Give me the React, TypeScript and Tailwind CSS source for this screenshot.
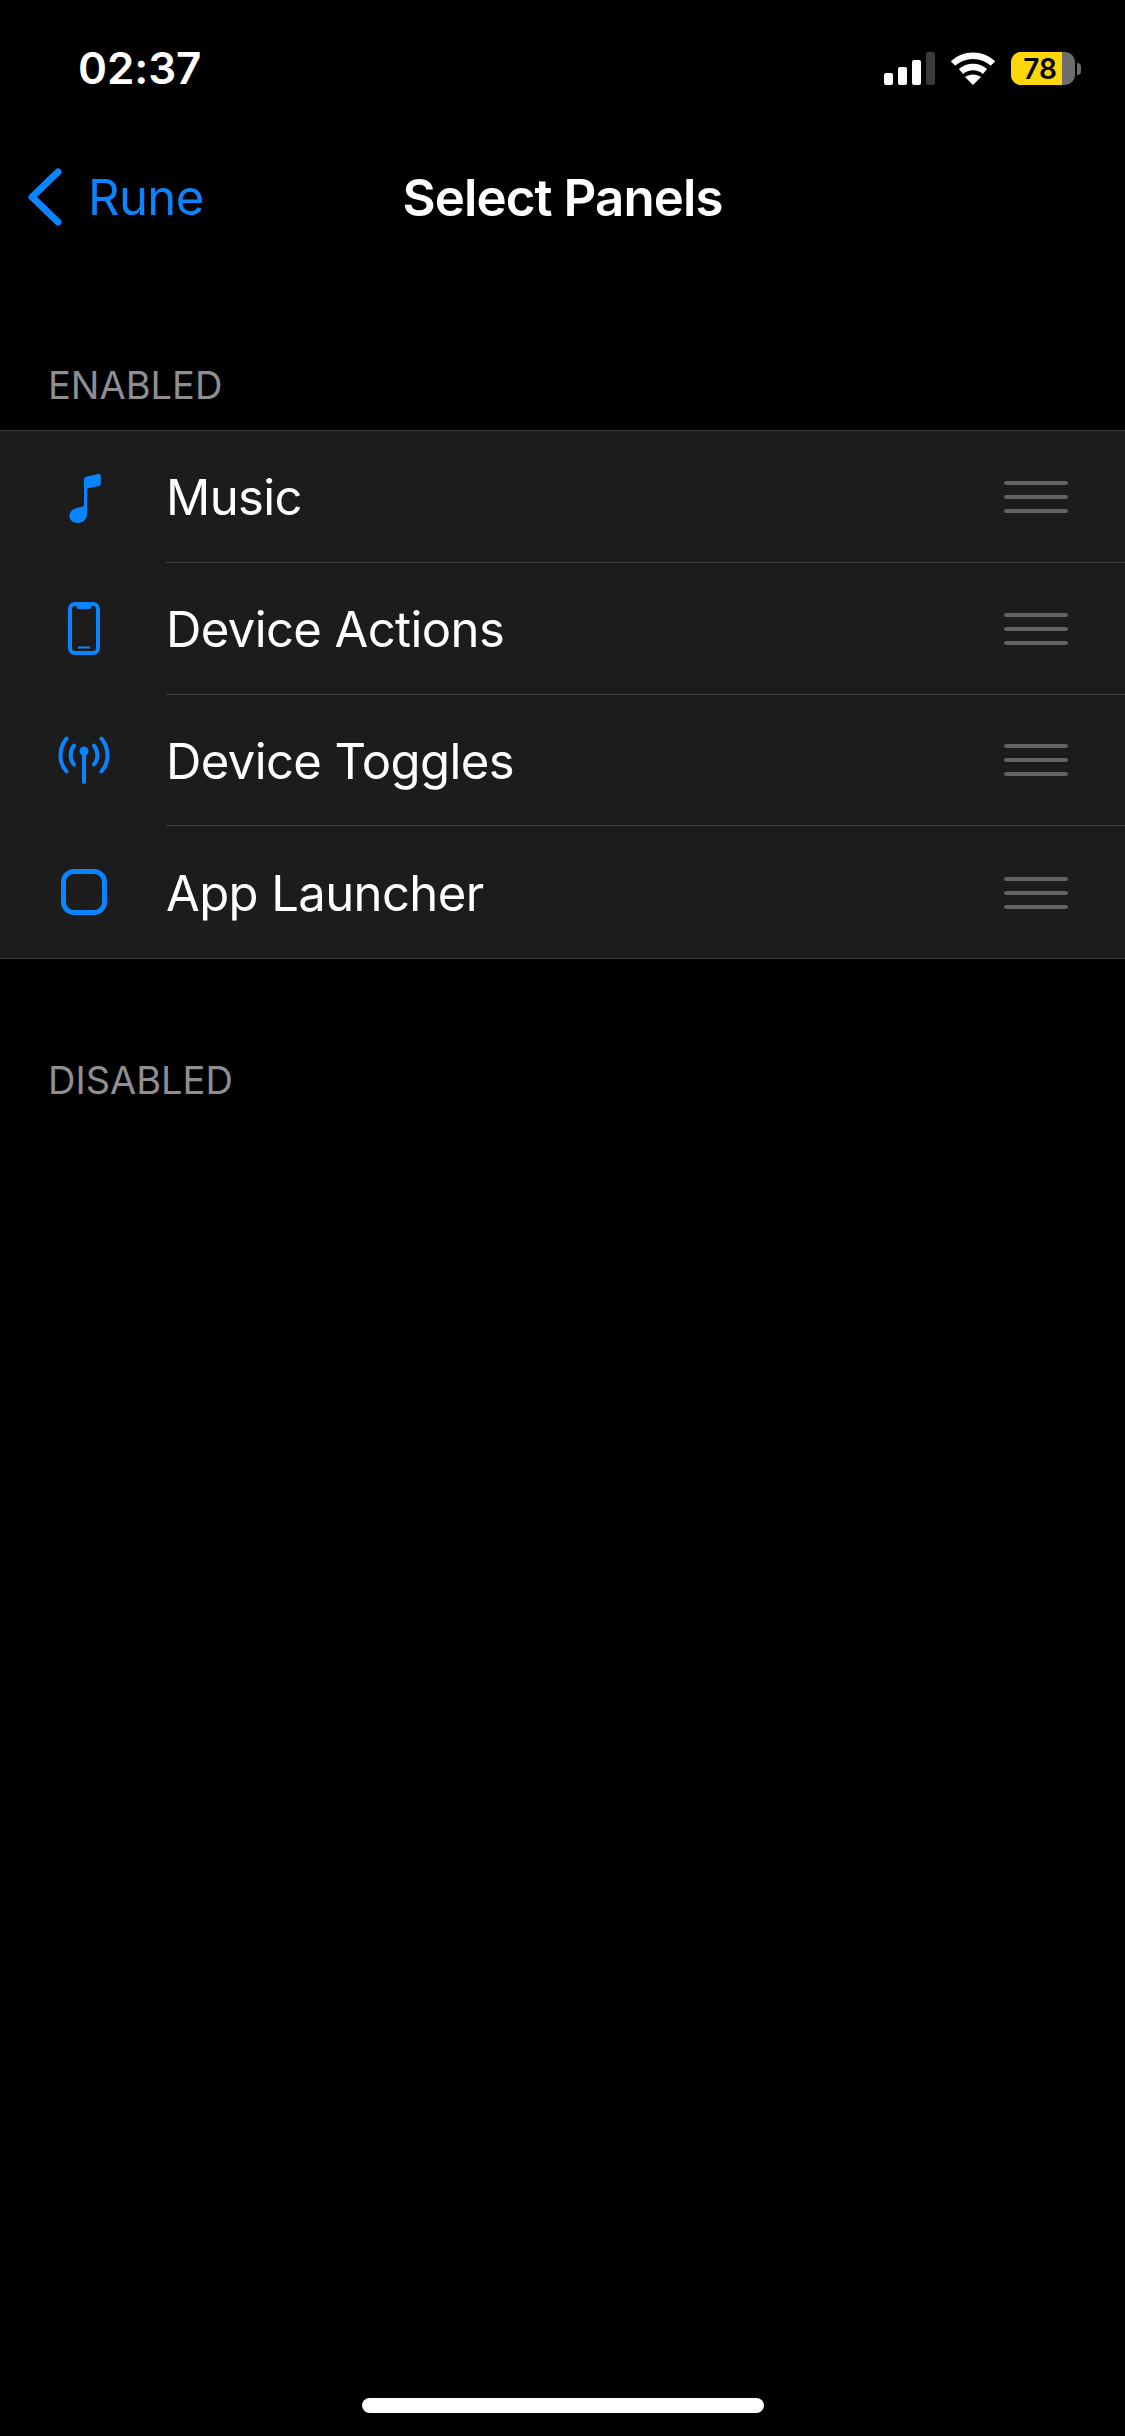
const panels = [
  { name: "Music", icon: <MusicIcon /> },
  { name: "Device Actions", icon: <PhoneIcon /> },
  { name: "Device Toggles", icon: <AntennaIcon /> },
  { name: "App Launcher", icon: <SquareIcon /> },
];

function MusicIcon() {
  return (
    <svg width="33" height="52" viewBox="0 0 33 52" fill="#0a84ff">
      <path d="M16 8.500c0-1.600.8-2.500 2.300-2.800L30 3c1.700-.4 2.800.5 2.800 2.200v7.600c0 1.300-.6 2-1.900 2.300L20.500 17.200c-.9.2-1.300.7-1.300 1.600v23.400c0 5.600-4 9.800-9.200 9.800C5 52 1.500 49.200 1.500 45c0-4.300 3-7.100 7.800-8.200l5-1.100c1.200-.3 1.700-.9 1.700-2.100z" />
    </svg>
  );
}

function PhoneIcon() {
  return (
    <svg width="32" height="53" viewBox="0 0 32 53" fill="none" stroke="#0a84ff">
      <rect x="2" y="2" width="28" height="49" rx="5" strokeWidth="4" />
      <path d="M9 3.500h14v1.200a2 2 0 0 1-2 2h-10a2 2 0 0 1-2-2z" fill="#0a84ff" strokeWidth="1" />
      <path d="M10 45.500h12" strokeWidth="2" />
    </svg>
  );
}

function AntennaIcon() {
  return (
    <svg width="54" height="48" viewBox="0 0 54 48" fill="none" stroke="#0a84ff" strokeWidth="4" strokeLinecap="round">
      <path d="M27 16v30" />
      <circle cx="27" cy="15" r="4.500" fill="#0a84ff" stroke="none" />
      <path d="M9.500 2.500c-8 10-8 24 0 33" />
      <path d="M44.500 2.500c8 10 8 24 0 33" />
      <path d="M17 9.500c-4.500 6-4.500 14 0 19" />
      <path d="M37 9.500c4.500 6 4.500 14 0 19" />
    </svg>
  );
}

function SquareIcon() {
  return <div className="h-[46px] w-[46px] rounded-[13px] border-[5px] border-[#0a84ff]" />;
}

function DragHandle() {
  return (
    <div className="mt-[1px] flex w-16 flex-col gap-[10px]">
      <div className="h-[4px] rounded-full bg-[#636366]" />
      <div className="h-[4px] rounded-full bg-[#636366]" />
      <div className="h-[4px] rounded-full bg-[#636366]" />
    </div>
  );
}

function SignalBars() {
  return (
    <div className="flex h-[33px] items-end gap-[5px]">
      <div className="h-[12px] w-[9px] rounded-[2px] bg-white" />
      <div className="h-[18px] w-[9px] rounded-[2px] bg-white" />
      <div className="h-[25px] w-[9px] rounded-[2px] bg-white" />
      <div className="h-[33px] w-[9px] rounded-[2px] bg-[#3a3a3c]" />
    </div>
  );
}

function WifiIcon() {
  return (
    <svg width="46" height="33" viewBox="0 0 46 33" fill="none" stroke="#fff" strokeWidth="6.500">
      <path d="M3 11.500C14 1 32 1 43 11.500" />
      <path d="M11 19.500c7-6 17-6 24 0" />
      <path d="M23 33l-8-8c4.500-3.500 11.500-3.500 16 0z" fill="#fff" stroke="none" />
    </svg>
  );
}

function Battery() {
  return (
    <div className="flex items-center gap-[2px]">
      <div className="flex h-[33px] w-[64px] overflow-hidden rounded-[10px] bg-[#6d6d6f]">
        <div className="flex w-[51px] items-center justify-end bg-[#ffd60a] pr-[5px] text-[28px] font-semibold leading-none text-black">
          78
        </div>
      </div>
      <div className="h-[12px] w-[4px] rounded-r-full bg-[#6d6d6f]" />
    </div>
  );
}

function SectionLabel({ children }: { children: string }) {
  return <div className="px-[48px] text-[38px] leading-[44px] text-[#8e8e93]">{children}</div>;
}

export default function App() {
  return (
    <div className="flex min-h-[2436px] flex-col bg-black font-['Inter',sans-serif] text-white">
      <div className="flex h-[136px] items-start justify-between pl-[78px] pr-[44px] pt-[52px]">
        <span className="text-[44px] font-semibold leading-[33px] tracking-[-0.1px]">02:37</span>
        <div className="flex items-center">
          <SignalBars />
          <div className="ml-[15px] mr-[15px]">
            <WifiIcon />
          </div>
          <Battery />
        </div>
      </div>

      <div className="relative flex h-[124px] items-center justify-center">
        <div className="absolute left-[28px] top-[32px] flex h-[58px] items-center gap-[24px] text-[#0a84ff]">
          <svg width="36" height="58" viewBox="0 0 36 58" fill="none" stroke="#0a84ff" strokeWidth="7" strokeLinecap="round" strokeLinejoin="round">
            <path d="M30 4L4 29l26 25" />
          </svg>
          <span className="pt-[1px] text-[49px] tracking-[-0.6px]">Rune</span>
        </div>
        <h1 className="text-[51px] font-semibold tracking-[-0.9px]">Select Panels</h1>
      </div>

      <div className="pt-[103px]">
        <SectionLabel>ENABLED</SectionLabel>
      </div>

      <div className="mt-[23px] border-y border-[#3d3d40] bg-[#1c1c1c]">
        {panels.map((panel, i) => (
          <div key={panel.name} className="flex h-[131.75px] items-center">
            <div className="flex w-[166px] shrink-0 justify-center pl-[2px]">{panel.icon}</div>
            <div className={`flex h-full flex-1 items-center justify-between pr-[57px] ${i < 3 ? "border-b border-[#3d3d40]" : ""}`}>
              <span className="pt-[3px] text-[49px] tracking-[-0.6px]">{panel.name}</span>
              <DragHandle />
            </div>
          </div>
        ))}
      </div>

      <div className="pt-[99px]">
        <SectionLabel>DISABLED</SectionLabel>
      </div>

      <div className="mt-auto flex justify-center pb-[23px]">
        <div className="h-[15px] w-[402px] rounded-full bg-white" />
      </div>
    </div>
  );
}
